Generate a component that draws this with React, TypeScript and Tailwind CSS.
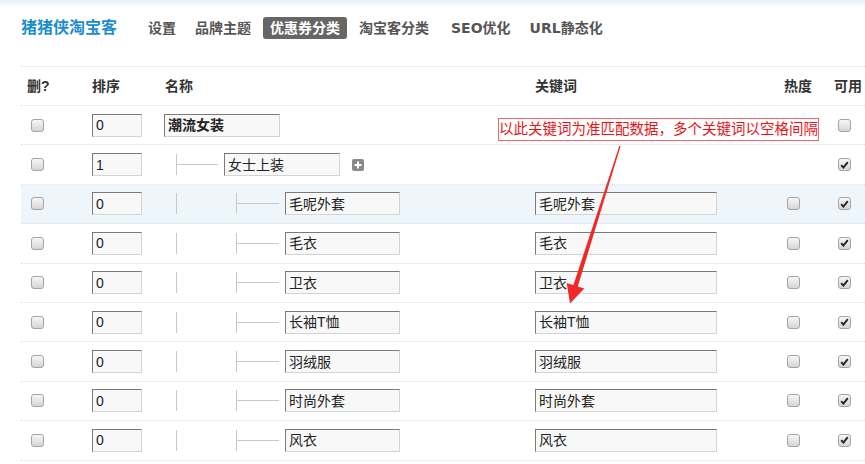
import React from "react";

type Row = {
  sort: string;
  name: string;
  level: 0 | 1 | 2;
  keyword?: string;
  avail: boolean;
  active?: boolean;
};

const navItems = ["设置", "品牌主题", "优惠券分类", "淘宝客分类", "SEO优化", "URL静态化"];

const rows: Row[] = [
  { sort: "0", name: "潮流女装", level: 0, avail: false },
  { sort: "1", name: "女士上装", level: 1, avail: true },
  { sort: "0", name: "毛呢外套", level: 2, keyword: "毛呢外套", avail: true, active: true },
  { sort: "0", name: "毛衣", level: 2, keyword: "毛衣", avail: true },
  { sort: "0", name: "卫衣", level: 2, keyword: "卫衣", avail: true },
  { sort: "0", name: "长袖T恤", level: 2, keyword: "长袖T恤", avail: true },
  { sort: "0", name: "羽绒服", level: 2, keyword: "羽绒服", avail: true },
  { sort: "0", name: "时尚外套", level: 2, keyword: "时尚外套", avail: true },
  { sort: "0", name: "风衣", level: 2, keyword: "风衣", avail: true },
];

function CheckBox({ checked = false }: { checked?: boolean }) {
  return (
    <span className="flex h-[13px] w-[13px] items-center justify-center rounded-[3px] border border-[#a4a4a4] bg-gradient-to-b from-[#f7f7f7] to-[#d5d5d5]">
      {checked && (
        <svg width="9" height="8" viewBox="0 0 9 8">
          <path d="M1.2 4.2 L3.4 6.6 L7.8 1.2" fill="none" stroke="#222" strokeWidth="1.9" />
        </svg>
      )}
    </span>
  );
}

function TextBox({ value, className = "", bold = false }: { value: string; className?: string; bold?: boolean }) {
  return (
    <div
      className={`flex h-[23px] items-center border border-t-[#7a7a7a] border-l-[#7a7a7a] border-r-[#d4d4d4] border-b-[#d4d4d4] bg-[#f8f8f8] pl-[3px] text-[14px] leading-none text-[#222] ${bold ? "font-bold" : ""} ${className}`}
    >
      {value}
    </div>
  );
}

// tree connector: vertical tick plus horizontal branch
function Branch({ width }: { width: number }) {
  return (
    <span className="flex h-[21px] items-center border-l border-[#c8c8c8]" style={{ width }}>
      <span className="h-px w-full bg-[#c8c8c8]" />
    </span>
  );
}

function PlusIcon() {
  return (
    <svg width="12" height="12" viewBox="0 0 12 12">
      <rect width="12" height="12" rx="2" fill="#8a8a8a" />
      <path d="M6 2.5 V9.5 M2.5 6 H9.5" stroke="#fff" strokeWidth="2" />
    </svg>
  );
}

function NameCell({ row }: { row: Row }) {
  if (row.level === 0) {
    return (
      <div className="flex items-center pl-[6px]">
        <TextBox value={row.name} bold className="w-[116px]" />
      </div>
    );
  }
  if (row.level === 1) {
    return (
      <div className="flex items-center pl-[18px]">
        <Branch width={42} />
        <TextBox value={row.name} className="ml-[6px] w-[116px]" />
        <span className="ml-[12px] flex">
          <PlusIcon />
        </span>
      </div>
    );
  }
  return (
    <div className="flex items-center pl-[18px]">
      <span className="h-[21px] w-[60px] border-l border-[#c8c8c8]" />
      <Branch width={43} />
      <TextBox value={row.name} className="ml-[6px] w-[115px]" />
    </div>
  );
}

export default function App() {
  return (
    <div className="relative h-[464px] w-full overflow-hidden bg-white font-['Liberation_Sans','Noto_Sans_CJK_SC',sans-serif]">
      <div className="h-[8px] bg-gradient-to-b from-[#e4eff7] to-white" />

      {/* top bar */}
      <div className="mt-[9px] flex h-[22px] items-center pl-[21px]">
        <span className="text-[16px] font-bold leading-none text-[#1b8dcd]">猪猪侠淘宝客</span>
        <nav className="ml-[24px] flex items-center gap-[5px] font-['DejaVu_Sans','Noto_Sans_CJK_SC',sans-serif]">
          {navItems.map((item) => (
            <span
              key={item}
              className={`flex h-[22px] items-center rounded-[3px] px-[7px] text-[14px] font-bold leading-none ${
                item === "优惠券分类" ? "bg-[#666] text-white" : "text-[#555]"
              } ${item === "SEO优化" ? "ml-[3px]" : ""}`}
            >
              {item}
            </span>
          ))}
        </nav>
      </div>

      {/* category table */}
      <div className="ml-[21px] mt-[27px] border-t border-dotted border-[#cfe2ee] text-[14px]">
        <div className="flex h-[39px] items-center border-b border-dotted border-[#cfe2ee] font-bold text-[#333]">
          <div className="w-[65px] pl-[6px]">删?</div>
          <div className="w-[72px] pl-[6px]">排序</div>
          <div className="w-[371px] pl-[7px]">名称</div>
          <div className="w-[251px] pl-[6px]">关键词</div>
          <div className="w-[50px] pl-[4px]">热度</div>
          <div className="flex-1 pl-[4px]">可用</div>
        </div>

        {rows.map((row, i) => (
          <div
            key={i}
            className={`flex h-[39.4px] items-center border-b border-dotted border-[#cfe2ee] ${row.active ? "bg-[#eef6fb]" : ""}`}
          >
            <div className="w-[65px] pl-[10px]">
              <CheckBox />
            </div>
            <div className="w-[72px] pl-[6px]">
              <TextBox value={row.sort} className="w-[50px]" />
            </div>
            <div className="w-[371px]">
              <NameCell row={row} />
            </div>
            <div className="w-[251px] pl-[6px]">
              {row.keyword && <TextBox value={row.keyword} className="w-[182px]" />}
            </div>
            <div className="w-[50px] pl-[7px]">{row.keyword && <CheckBox />}</div>
            <div className="flex-1 pl-[8px]">
              <CheckBox checked={row.avail} />
            </div>
          </div>
        ))}
      </div>

      {/* keyword hint callout */}
      <div className="absolute left-[498px] top-[118px] flex h-[23px] w-[321px] items-center justify-center whitespace-nowrap border border-[#f46a6a] bg-white text-[14.5px] leading-none text-[#e8141a]">
        以此关键词为准匹配数据，多个关键词以空格间隔
      </div>
      <svg className="pointer-events-none absolute left-0 top-0" width="865" height="464">
        <polygon
          points="619.4,145.8 620.6,146.2 577.8,286.4 584.3,288.6 570,303.5 566.7,283 573.4,285"
          fill="#f02828"
        />
      </svg>
    </div>
  );
}
